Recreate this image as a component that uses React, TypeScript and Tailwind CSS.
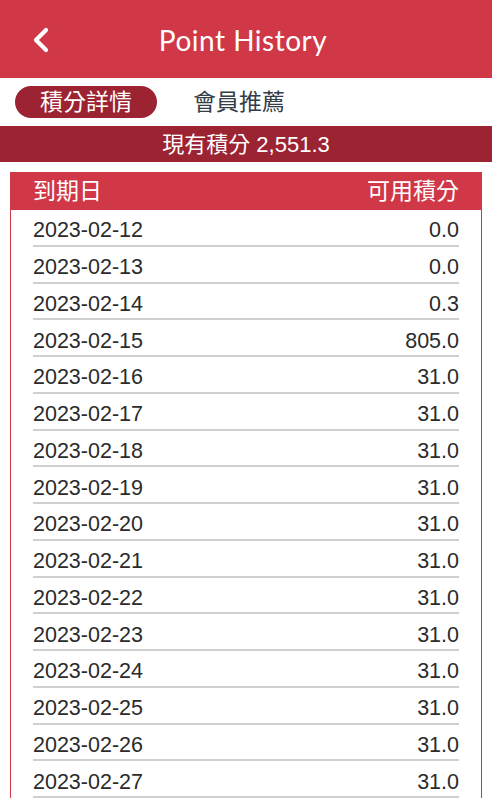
import React from "react";

const rows: [string, string][] = [
  ["2023-02-12", "0.0"],
  ["2023-02-13", "0.0"],
  ["2023-02-14", "0.3"],
  ["2023-02-15", "805.0"],
  ["2023-02-16", "31.0"],
  ["2023-02-17", "31.0"],
  ["2023-02-18", "31.0"],
  ["2023-02-19", "31.0"],
  ["2023-02-20", "31.0"],
  ["2023-02-21", "31.0"],
  ["2023-02-22", "31.0"],
  ["2023-02-23", "31.0"],
  ["2023-02-24", "31.0"],
  ["2023-02-25", "31.0"],
  ["2023-02-26", "31.0"],
  ["2023-02-27", "31.0"],
];

export default function App() {
  return (
    <div
      className="w-[492px] h-[800px] overflow-hidden bg-white"
      style={{ fontFamily: '"Liberation Sans", "Noto Sans CJK TC", sans-serif' }}
    >
      <div className="h-[78px] bg-[#d03747] relative flex items-center justify-center">
        <svg
          className="absolute left-[31px] top-[27px]"
          width="20"
          height="26"
          viewBox="0 0 20 26"
        >
          <path
            d="M15 3 L5 13 L15 23"
            fill="none"
            stroke="white"
            strokeWidth="4.2"
            strokeLinecap="round"
            strokeLinejoin="round"
          />
        </svg>
        <span
          className="text-white text-[28px] tracking-[0.5px] mt-[1px] ml-[-6px]"
          style={{ fontFamily: '"Lato", "Open Sans", sans-serif' }}
        >
          Point History
        </span>
      </div>
      <div className="h-[48px] flex items-center pl-[15px]">
        <div className="h-[32px] w-[142px] rounded-full bg-[#9c2332] text-white text-[23px] flex items-center justify-center">
          積分詳情
        </div>
        <div className="ml-[36px] text-[23px] text-[#333d47]">會員推薦</div>
      </div>
      <div className="h-[36px] bg-[#9c2332] text-white text-[22px] flex items-center justify-center">
        現有積分 2,551.3
      </div>
      <div className="mt-[10px] mx-[10px] border-x-[1.5px] border-t-[1.5px] border-[#d03747]">
        <div className="h-[37px] bg-[#d03747] text-white text-[23px] flex items-center justify-between px-[22px]">
          <span>到期日</span>
          <span>可用積分</span>
        </div>
        <div className="px-[22px]">
          {rows.map(([d, v]) => (
            <div
              key={d}
              className="h-[36.77px] border-b-[2px] border-[#cfcfcf] flex items-center justify-between text-[21.5px] text-[#2b2b2b] pt-[6px]"
            >
              <span>{d}</span>
              <span>{v}</span>
            </div>
          ))}
        </div>
      </div>
    </div>
  );
}
